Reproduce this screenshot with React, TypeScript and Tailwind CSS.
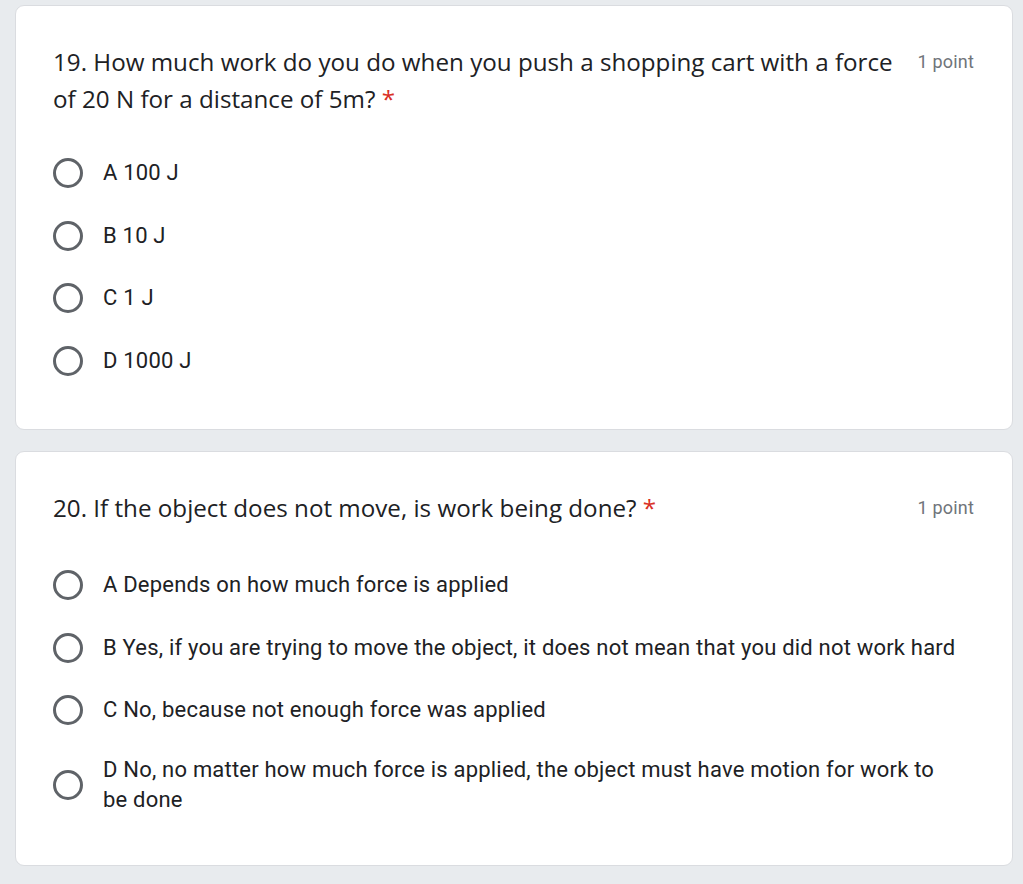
import React from "react";

type Q = {
  title: string;
  options: string[];
};

const questions: Q[] = [
  {
    title: "19. How much work do you do when you push a shopping cart with a force of 20 N for a distance of 5m?",
    options: ["A 100 J", "B 10 J", "C 1 J", "D 1000 J"],
  },
  {
    title: "20. If the object does not move, is work being done?",
    options: [
      "A Depends on how much force is applied",
      "B Yes, if you are trying to move the object, it does not mean that you did not work hard",
      "C No, because not enough force was applied",
      "D No, no matter how much force is applied, the object must have motion for work to be done",
    ],
  },
];

function Radio() {
  return (
    <div className="h-[36.5px] shrink-0 flex items-center">
      <div className="w-[30px] h-[30px] rounded-full border-[3px] border-[#5f6368] box-border" />
    </div>
  );
}

function Card({ q }: { q: Q }) {
  return (
    <div className="bg-white border border-[#dadce0] rounded-[9px] pl-[37px] pr-[38px] pt-[37px] pb-[37px]">
      <div className="flex items-start justify-between gap-[20px] min-h-[40px]">
        <h2
          className="text-[24.2px] leading-[37px] text-[#202124]"
          style={{ fontFamily: '"Open Sans", sans-serif' }}
        >
          {q.title}&nbsp;<span className="text-[#d93025]">*</span>
        </h2>
        <div
          className="shrink-0 text-[18px] leading-[37px] text-[#70757a] whitespace-nowrap tracking-[0.2px]"
          style={{ fontFamily: 'Roboto, sans-serif' }}
        >
          1 point
        </div>
      </div>
      <div className="mt-[25px] flex flex-col">
        {q.options.map((o) => (
          <div key={o} className="flex items-center gap-[20px] py-[13px]">
            <Radio />
            <div
              className="text-[22px] leading-[30px] text-[#202124] tracking-[0.2px] pr-[12px]"
              style={{ fontFamily: 'Roboto, sans-serif' }}
            >
              {o}
            </div>
          </div>
        ))}
      </div>
    </div>
  );
}

export default function App() {
  return (
    <div className="min-h-[884px] bg-[#e8ebee] pt-[5px] pb-[18px]">
      <div className="ml-[15px] w-[998px] flex flex-col gap-[21px]">
        {questions.map((q) => (
          <Card key={q.title} q={q} />
        ))}
      </div>
    </div>
  );
}
